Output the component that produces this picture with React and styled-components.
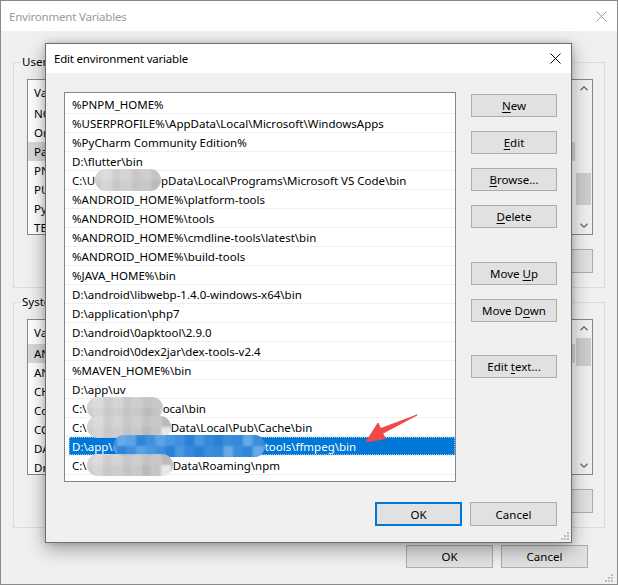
import styled, { createGlobalStyle } from 'styled-components';

const GlobalStyle = createGlobalStyle`
  * { box-sizing: border-box; }
  html, body { margin: 0; padding: 0; background: #ffffff; }
  body {
    font-family: 'Noto Sans', 'Liberation Sans', sans-serif;
    font-size: 11.5px;
    color: #000;
  }
`;

const USER_VARS = ['NODE_PATH', 'OneDrive', 'Path', 'PNPM_HOME', 'PUB_HOSTED_URL', 'PyCharm Community Edition', 'TEMP'];
const SYSTEM_VARS = ['ANDROID_HOME', 'ANDROID_SDK_HOME', 'CHROME_EXECUTABLE', 'ComSpec', 'COMPOSER_HOME', 'DART_HOME', 'DriverData'];

// strings are printed, numbers are redacted spans of that width
const PATHS = [
  ['%PNPM_HOME%'],
  ['%USERPROFILE%\\AppData\\Local\\Microsoft\\WindowsApps'],
  ['%PyCharm Community Edition%'],
  ['D:\\flutter\\bin'],
  ['C:\\U', 66, 'pData\\Local\\Programs\\Microsoft VS Code\\bin'],
  ['%ANDROID_HOME%\\platform-tools'],
  ['%ANDROID_HOME%\\tools'],
  ['%ANDROID_HOME%\\cmdline-tools\\latest\\bin'],
  ['%ANDROID_HOME%\\build-tools'],
  ['%JAVA_HOME%\\bin'],
  ['D:\\android\\libwebp-1.4.0-windows-x64\\bin'],
  ['D:\\application\\php7'],
  ['D:\\android\\0apktool\\2.9.0'],
  ['D:\\android\\0dex2jar\\dex-tools-v2.4'],
  ['%MAVEN_HOME%\\bin'],
  ['D:\\app\\uv'],
  ['C:\\', 76, 'ocal\\bin'],
  ['C:\\', 84, 'Data\\Local\\Pub\\Cache\\bin'],
  ['D:\\app\\', 152, 'tools\\ffmpeg\\bin'],
  ['C:\\', 86, 'Data\\Roaming\\npm'],
  [''],
];
const SELECTED = 18;

const GRAYS = ['#d6d4d6', '#c6c3c6', '#e4e3e4', '#cfcdcf', '#bcb9bd', '#dcdadc', '#c9c7ca', '#e8e8e8'];
const BLUES = ['#2f86d8', '#4a98e0', '#3a8edc', '#5ca3e5', '#2a80d4', '#66aae7', '#4190dd', '#3588da'];

function Redact({ width, selected }) {
  const shades = selected ? BLUES : GRAYS;
  const cols = Math.ceil(width / 9);
  const cells = [];
  for (let c = 0; c < cols; c++) {
    for (let r = 0; r < 2; r++) {
      cells.push(<Cell key={c + '-' + r} $color={shades[(c * 5 + r * 3 + (c >> 1)) % shades.length]} />);
    }
  }
  return (
    <Smudge $width={width} $edge={selected ? '#3d8edb' : '#ececec'}>
      <Mosaic>{cells}</Mosaic>
    </Smudge>
  );
}

function CloseIcon({ color }) {
  return (
    <svg width="11" height="11" viewBox="0 0 11 11">
      <path d="M0.5 0.5 L10.5 10.5 M10.5 0.5 L0.5 10.5" stroke={color} strokeWidth="1" fill="none" />
    </svg>
  );
}

function Chevron({ down }) {
  return (
    <svg width="8" height="5" viewBox="0 0 8 5">
      <path d={down ? 'M0.5 0.8 L4 4.2 L7.5 0.8' : 'M0.5 4.2 L4 0.8 L7.5 4.2'} stroke="#606060" strokeWidth="1.2" fill="none" />
    </svg>
  );
}

function GripIcon() {
  return (
    <svg width="9" height="9" viewBox="0 0 9 9">
      {[[7, 1], [4, 4], [7, 4], [1, 7], [4, 7], [7, 7]].map(([x, y]) => (
        <rect key={x + '' + y} x={x} y={y} width="2" height="2" fill="#bdbdbd" />
      ))}
    </svg>
  );
}

function VarList({ names, active, thumbOffset, thumbSize }) {
  return (
    <ListFrame>
      <ListColumn>
        <ListHeader>Variable</ListHeader>
        {names.map((n, i) => (
          <VarRow key={n} $active={i === active}>{n}</VarRow>
        ))}
      </ListColumn>
      <ScrollBar>
        <ScrollArrow><Chevron /></ScrollArrow>
        <ScrollTrack>
          <Thumb $offset={thumbOffset} $size={thumbSize} />
        </ScrollTrack>
        <ScrollArrow><Chevron down /></ScrollArrow>
      </ScrollBar>
    </ListFrame>
  );
}

const Window = styled.div`
  position: relative;
  width: 618px;
  height: 585px;
  border: 1px solid #8a8a8a;
  background: #f0f0f0;
  display: flex;
  flex-direction: column;
  overflow: hidden;
`;

const TitleBar = styled.div`
  flex-shrink: 0;
  height: ${(p) => p.$height}px;
  background: #ffffff;
  display: flex;
  align-items: center;
  justify-content: space-between;
  padding-left: 8px;
  letter-spacing: -0.2px;
  color: ${(p) => (p.$dim ? '#9a9a9a' : '#000')};
`;

const CloseButton = styled.div`
  width: 32px;
  height: 100%;
  display: flex;
  align-items: center;
  justify-content: center;
`;

const WindowBody = styled.div`
  flex: 1;
  display: flex;
  flex-direction: column;
  padding: 23px 12px 0 12px;
`;

const Group = styled.fieldset`
  margin: ${(p) => p.$top || 0}px 0 0 0;
  padding: 9px 11px 14px 13px;
  border: 1px solid #dcdcdc;
  min-width: 0;
`;

const Legend = styled.legend`
  margin-left: -7px;
  padding: 0 2px;
  line-height: 16px;
`;

const ListFrame = styled.div`
  height: 156px;
  display: grid;
  grid-template-columns: 1fr 17px;
  border: 1px solid #828790;
  background: #ffffff;
  overflow: hidden;
`;

const ListColumn = styled.div`
  display: flex;
  flex-direction: column;
  white-space: nowrap;
  overflow: hidden;
`;

const ListHeader = styled.div`
  height: 24px;
  flex-shrink: 0;
  display: flex;
  align-items: center;
  padding-left: 6px;
`;

const VarRow = styled.div`
  height: 19px;
  flex-shrink: 0;
  display: flex;
  align-items: center;
  padding-left: 6px;
  background: ${(p) => (p.$active ? '#d9d9d9' : 'transparent')};
`;

const ScrollBar = styled.div`
  display: flex;
  flex-direction: column;
  background: #f0f0f0;
`;

const ScrollArrow = styled.div`
  height: 17px;
  flex-shrink: 0;
  display: flex;
  align-items: center;
  justify-content: center;
`;

const ScrollTrack = styled.div`
  flex: 1;
  padding: 0 1px;
`;

const Thumb = styled.div`
  margin-top: ${(p) => p.$offset}px;
  height: ${(p) => p.$size}px;
  background: #cdcdcd;
`;

const GroupButtons = styled.div`
  display: flex;
  justify-content: flex-end;
  gap: 8px;
  margin-top: 14px;
`;

const WindowFooter = styled.div`
  display: flex;
  justify-content: flex-end;
  gap: 8px;
  margin-top: 17px;
  padding-right: 17px;
`;

const PushButton = styled.div`
  flex-shrink: 0;
  width: ${(p) => (p.$width ? `${p.$width}px` : '100%')};
  height: ${(p) => p.$height}px;
  margin-top: ${(p) => p.$gapBefore || 0}px;
  display: flex;
  align-items: center;
  justify-content: center;
  background: #e1e1e1;
  border: ${(p) => (p.$default ? '2px solid #0078d7' : '1px solid #adadad')};
  white-space: pre;

  u {
    text-underline-offset: 2px;
  }
`;

const Grip = styled.div`
  position: absolute;
  right: ${(p) => p.$right}px;
  bottom: ${(p) => p.$bottom}px;
  width: 9px;
  height: 9px;
  display: flex;
`;

const Dialog = styled.div`
  position: absolute;
  left: 44px;
  top: 42px;
  width: 527px;
  height: 500px;
  display: flex;
  flex-direction: column;
  background: #f0f0f0;
  border: 1px solid #6e6e6e;
  box-shadow: 0 6px 18px rgba(0, 0, 0, 0.35), 0 0 6px rgba(0, 0, 0, 0.15);
`;

const DialogBody = styled.div`
  flex: 1;
  display: flex;
  flex-direction: column;
  padding: 19px 14px 16px 18px;
`;

const MainRow = styled.div`
  display: flex;
  gap: 15px;
`;

const PathList = styled.div`
  width: 392px;
  height: 390px;
  flex-shrink: 0;
  display: flex;
  flex-direction: column;
  padding-top: 2px;
  border: 1px solid #828790;
  background: #ffffff;
  overflow: hidden;
`;

const PathRow = styled.div`
  height: 19px;
  flex-shrink: 0;
  display: flex;
  padding-left: 4px;
  border-bottom: 1px solid #f0f0f0;
`;

const PathText = styled.div`
  flex: 1;
  display: flex;
  align-items: center;
  padding-left: 3px;
  white-space: nowrap;
  color: ${(p) => (p.$selected ? '#ffffff' : '#000')};
  background: ${(p) => (p.$selected ? '#0078d7' : 'transparent')};
  outline: ${(p) => (p.$selected ? '1px dotted rgba(255, 255, 255, 0.55)' : 'none')};
  outline-offset: -1px;
`;

const Smudge = styled.span`
  flex-shrink: 0;
  width: ${(p) => p.$width}px;
  height: 22px;
  border-radius: 11px;
  overflow: hidden;
  background: ${(p) => p.$edge};
`;

const Mosaic = styled.span`
  display: grid;
  grid-auto-flow: column;
  grid-template-rows: repeat(2, 1fr);
  grid-auto-columns: 9px;
  height: 100%;
  filter: blur(1.2px);
  transform: scale(1.08);
`;

const Cell = styled.span`
  background: ${(p) => p.$color};
`;

const ButtonColumn = styled.div`
  width: 86px;
  flex-shrink: 0;
  display: flex;
  flex-direction: column;
  gap: 14px;
  padding-top: 2px;
`;

const DialogFooter = styled.div`
  display: flex;
  justify-content: flex-end;
  gap: 8px;
  margin-top: 20px;
`;

const Pointer = styled.svg`
  position: absolute;
  left: 309px;
  top: 361px;
`;

export default function App() {
  return (
    <>
      <GlobalStyle />
      <Window>
        <TitleBar $height={30} $dim>
          <span>Environment Variables</span>
          <CloseButton><CloseIcon color="#a0a0a0" /></CloseButton>
        </TitleBar>
        <WindowBody>
          <Group>
            <Legend>User variables for Admin</Legend>
            <VarList names={USER_VARS} active={2} thumbOffset={76} thumbSize={32} />
            <GroupButtons>
              <PushButton $width={87} $height={24}>New...</PushButton>
              <PushButton $width={87} $height={24}>Edit...</PushButton>
              <PushButton $width={87} $height={24}>Delete</PushButton>
            </GroupButtons>
          </Group>
          <Group $top={6}>
            <Legend>System variables</Legend>
            <VarList names={SYSTEM_VARS} active={0} thumbOffset={1} thumbSize={28} />
            <GroupButtons>
              <PushButton $width={87} $height={24}>New...</PushButton>
              <PushButton $width={87} $height={24}>Edit...</PushButton>
              <PushButton $width={87} $height={24}>Delete</PushButton>
            </GroupButtons>
          </Group>
          <WindowFooter>
            <PushButton $width={87} $height={23}>OK</PushButton>
            <PushButton $width={87} $height={23}>Cancel</PushButton>
          </WindowFooter>
        </WindowBody>
        <Grip $right={4} $bottom={2}><GripIcon /></Grip>

        <Dialog>
          <TitleBar $height={29}>
            <span>Edit environment variable</span>
            <CloseButton><CloseIcon color="#000" /></CloseButton>
          </TitleBar>
          <DialogBody>
            <MainRow>
              <PathList>
                {PATHS.map((parts, i) => (
                  <PathRow key={i}>
                    <PathText $selected={i === SELECTED}>
                      {parts.map((p, j) =>
                        typeof p === 'number'
                          ? <Redact key={j} width={p} selected={i === SELECTED} />
                          : <span key={j}>{p}</span>
                      )}
                    </PathText>
                  </PathRow>
                ))}
              </PathList>
              <ButtonColumn>
                <PushButton $height={23}><span><u>N</u>ew</span></PushButton>
                <PushButton $height={23}><span><u>E</u>dit</span></PushButton>
                <PushButton $height={23}><span><u>B</u>rowse...</span></PushButton>
                <PushButton $height={23}><span><u>D</u>elete</span></PushButton>
                <PushButton $height={23} $gapBefore={20}><span>Move <u>U</u>p</span></PushButton>
                <PushButton $height={23}><span>Move D<u>o</u>wn</span></PushButton>
                <PushButton $height={23} $gapBefore={19}><span>Edit <u>t</u>ext...</span></PushButton>
              </ButtonColumn>
            </MainRow>
            <DialogFooter>
              <PushButton $width={87} $height={24} $default>OK</PushButton>
              <PushButton $width={87} $height={24}>Cancel</PushButton>
            </DialogFooter>
          </DialogBody>
          <Grip $right={2} $bottom={2}><GripIcon /></Grip>
          <Pointer width="70" height="45" viewBox="0 0 70 45">
            <path
              d="M11 37 L23 18 L25.6 23.6 L62 10 L27.6 28.4 L30.5 33.5 Z"
              fill="#ef4a4a"
              stroke="#ef4a4a"
              strokeWidth="1"
              strokeLinejoin="round"
            />
          </Pointer>
        </Dialog>
      </Window>
    </>
  );
}
